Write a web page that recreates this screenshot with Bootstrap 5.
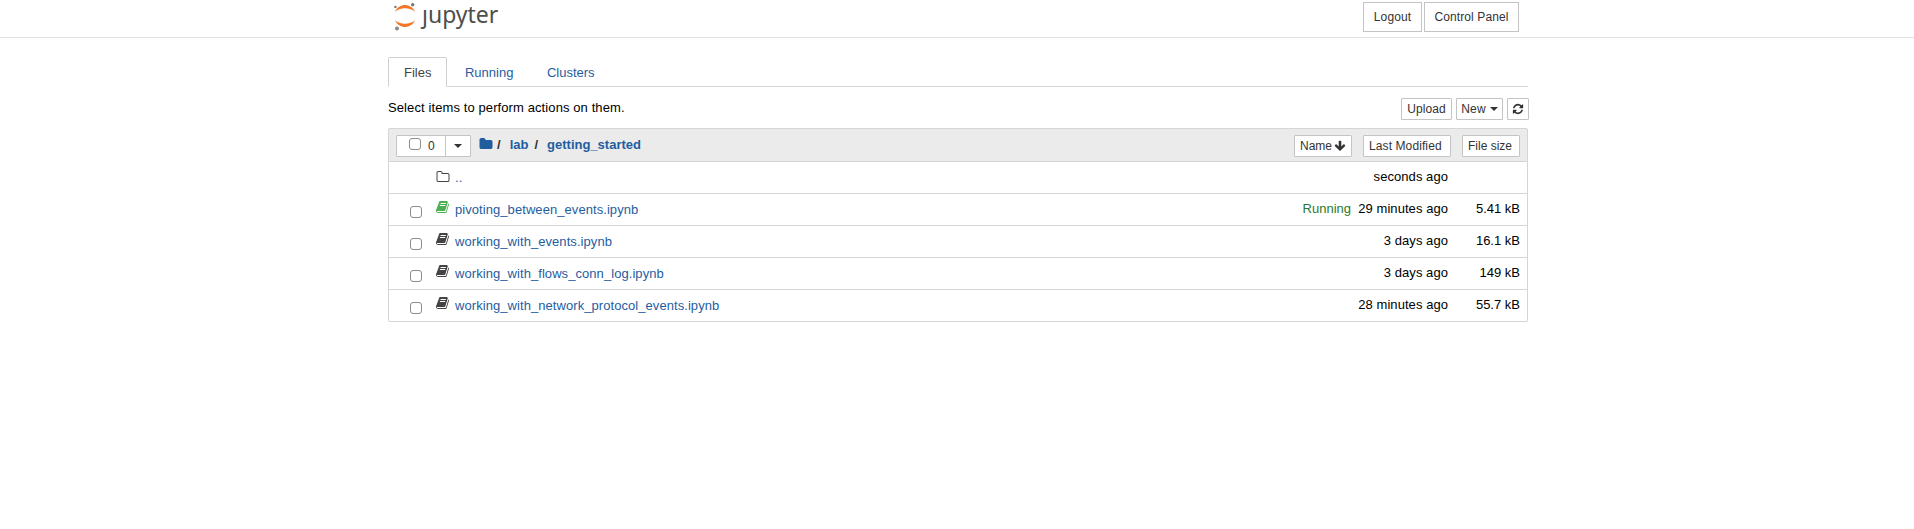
<!DOCTYPE html>
<html lang="en">
<head>
<meta charset="utf-8">
<title>jupyter</title>
<link href="https://cdn.jsdelivr.net/npm/bootstrap@5.3.0/dist/css/bootstrap.min.css" rel="stylesheet">
<style>
body{font-family:"Liberation Sans",Arial,sans-serif;font-size:13px;line-height:20px;color:#000;background:#fff;padding-left:2px}
a{color:#1f5d9f;text-decoration:none}
svg{display:block;fill:currentColor;flex:none}
.page-width{width:1140px}
.site-head{height:38px;border-bottom:1px solid #e2e2e2;margin-left:-2px;padding-left:2px}
.wordmark{font-family:"Noto Sans",sans-serif;font-size:23px;line-height:29px;color:#4e4e4e}
.btn{--bs-btn-font-size:12px;--bs-btn-line-height:18px;--bs-btn-padding-x:5px;--bs-btn-padding-y:1px;--bs-btn-border-radius:1px;--bs-btn-border-color:#c4c4c4;--bs-btn-bg:#fff;--bs-btn-color:#333;height:22px;white-space:nowrap;display:inline-flex;align-items:center}
.site-head .btn{height:30px;--bs-btn-padding-x:0;--bs-btn-border-radius:0;justify-content:center;margin-top:2px;letter-spacing:.1px}
.nav-tabs{--bs-nav-link-padding-x:15px;--bs-nav-link-padding-y:4px;--bs-nav-tabs-border-color:#d5d5d5;--bs-nav-tabs-border-radius:2px;--bs-nav-link-color:#1f5d9f;--bs-nav-tabs-link-active-border-color:#d0d0d0 #d0d0d0 #fff;--bs-nav-tabs-link-active-color:#444;--bs-nav-link-font-size:13px;height:30px;margin-top:19px}
.nav-tabs .nav-link{height:30px;line-height:22px}
.nav-tabs .nav-item{margin-right:1.5px}
.toolbar{height:41px;padding-top:11px;margin-right:-1px}
.toolbar .btn{justify-content:center;--bs-btn-padding-x:0;letter-spacing:.12px}
.hint{letter-spacing:.1px}
.tri{border:4px solid transparent;border-top-color:#333;border-bottom:0}
.files{--bs-list-group-border-color:#d5d5d5;--bs-list-group-border-radius:2px;--bs-list-group-item-padding-x:7px;--bs-list-group-item-padding-y:0;--bs-list-group-color:#000}
.files .list-group-item{height:32px}
.files .list-head{height:34px;background:#ebebeb}
.tick{width:12px;height:12px;border:1px solid #8c8c8c;border-radius:3px;background:#fff;flex:none}
.row-tick{width:12px;margin:4px 14px 0 14px}
.book{color:#444;margin-top:2px}
.file-name{margin:2px 0 0 5px;letter-spacing:.065px}
.when,.bytes,.running{margin-top:1px}
.when{width:97px;letter-spacing:.06px}
.bytes{width:72px}
.running{color:#2b7a2b}
.crumbs{color:#333;font-weight:700}
</style>
</head>
<body>
<header class="site-head">
  <div class="page-width mx-auto d-flex justify-content-between">
    <div class="d-flex ps-1">
      <svg width="25" height="32" viewBox="0 0 25 32" style="margin-left:1px">
        <path fill="#f37726" d="M2 11.700C4 7.200 8 5 12 5s8 2.200 10 6.700C19.500 9.400 16 8.200 12 8.200S4.500 9.400 2 11.700zM2 20.200C4 24.700 8 27 12 27s8-2.300 10-6.800c-2.500 2.300-6 3.500-10 3.500S4.500 22.500 2 20.200z"/>
        <circle cx="2.400" cy="6.900" r="1.200" fill="#777"/><circle cx="19.700" cy="4.700" r="1.700" fill="#777"/><circle cx="4" cy="28.500" r="2" fill="#888"/>
      </svg>
      <div class="wordmark ps-1">ȷupyter</div>
    </div>
    <div class="d-flex">
      <button class="btn" style="width:59px;margin-right:2px">Logout</button>
      <button class="btn" style="width:95px;margin-right:9px">Control Panel</button>
    </div>
  </div>
</header>
<main class="page-width mx-auto">
  <ul class="nav nav-tabs">
    <li class="nav-item"><a class="nav-link active" href="#">Files</a></li>
    <li class="nav-item"><a class="nav-link" href="#">Running</a></li>
    <li class="nav-item"><a class="nav-link" href="#">Clusters</a></li>
  </ul>
  <div class="d-flex toolbar">
    <div class="me-auto hint">Select items to perform actions on them.</div>
    <div class="d-flex gap-1">
      <button class="btn" style="width:51px">Upload</button>
      <button class="btn gap-1" style="width:47px">New <span class="tri"></span></button>
      <button class="btn" style="width:22px"><svg width="12" height="12" viewBox="0 0 1792 1792"><path d="M1639 1056q0 5-1 7-64 268-268 434.500t-478 166.500q-146 0-282.500-55t-243.500-157l-129 129q-19 19-45 19t-45-19-19-45v-448q0-26 19-45t45-19h448q26 0 45 19t19 45-19 45l-137 137q71 66 161 102t187 36q134 0 250-65t186-179q11-17 53-117 8-23 30-23h192q13 0 22.500 9.500t9.500 22.500zm25-800v448q0 26-19 45t-45 19h-448q-26 0-45-19t-19-45 19-45l138-138q-148-137-349-137-134 0-250 65t-186 179q-11 17-53 117-8 23-30 23h-199q-13 0-22.500-9.500t-9.500-22.500v-7q65-268 270-434.500t480-166.500q146 0 284 55.500t245 156.500l130-129q19-19 45-19t45 19 19 45z"/></svg></button>
    </div>
  </div>
  <svg width="0" height="0" class="position-absolute"><defs>
    <symbol id="book" viewBox="0 0 1792 1792"><path transform="translate(-64 0)" d="M1703 478q40 57 18 129l-275 906q-19 64-76.500 107.500t-122.500 43.500h-923q-77 0-148.500-53.500t-99.500-131.500q-24-67-2-127 0-4 3-27t4-37q1-8-3-21.500t-3-19.500q2-11 8-21t16.500-23.500 16.500-23.500q23-38 45-91.500t30-91.500q3-10 .5-30t-.5-28q3-11 17-28t17-23q21-36 42-92t25-90q1-9-2.500-32t.5-28q4-13 22-30.500t22-22.500q19-26 42.500-84.500t27.500-96.500q1-8-3-25.500t-2-26.500q2-8 9-18t18-23 17-21q8-12 16.500-30.500t15-35 16-36 19.500-32 26.500-23.500 36-11.500 47.500 5.500l-1 3q38-9 51-9h761q74 0 114 56t18 130l-274 906q-36 119-71.500 153.500t-128.500 34.500h-869q-27 0-38 15-11 16-1 43 24 70 144 70h923q29 0 56-15.500t35-41.500l300-987q7-22 5-57 38 15 59 43zm-1064 2q-4 13 2 22.500t20 9.500h608q13 0 25.500-9.500t16.500-22.500l21-64q4-13-2-22.500t-20-9.500h-608q-13 0-25.500 9.500t-16.500 22.500zm-83 256q-4 13 2 22.500t20 9.500h608q13 0 25.500-9.500t16.500-22.500l21-64q4-13-2-22.500t-20-9.500h-608q-13 0-25.500 9.500t-16.500 22.500z"/></symbol>
  </defs></svg>
  <div class="list-group files">
    <div class="list-group-item list-head d-flex align-items-start">
      <div class="btn-group" style="margin-top:6px">
        <button class="btn" style="width:50px;padding-left:12px"><span class="tick" style="margin:-4px 7px 0 0"></span>0</button>
        <button class="btn justify-content-center" style="width:26px"><span class="tri"></span></button>
      </div>
      <div class="crumbs d-flex" style="margin:6px 0 0 8px">
        <a href="#"><svg width="14" height="14" viewBox="0 0 1792 1792" style="margin-top:2px"><path d="M1728 608v704q0 92-66 158t-158 66h-1216q-92 0-158-66t-66-158v-960q0-92 66-158t158-66h320q92 0 158 66t66 158v32h672q92 0 158 66t66 158z"/></svg></a>
        <span style="margin:0 9px 0 4px">/</span><a href="#">lab</a><span style="margin:0 9px 0 6px">/</span><a href="#">getting_started</a>
      </div>
      <div class="ms-auto d-flex" style="margin-top:6px">
        <button class="btn" style="width:58px;margin-right:11px">Name<svg width="12" height="12" viewBox="0 0 1792 1792" style="margin-left:2px"><path d="M1675 832q0 53-37 90l-651 652q-39 37-91 37-53 0-90-37l-651-652q-38-36-38-90 0-53 38-91l74-75q39-37 91-37 53 0 90 37l294 294v-704q0-52 38-90t90-38h128q52 0 90 38t38 90v704l294-294q37-37 90-37 52 0 91 37l75 75q37 39 37 91z"/></svg></button>
        <button class="btn" style="width:88px;margin-right:11px;letter-spacing:.1px">Last Modified</button>
        <button class="btn" style="width:58px">File size</button>
      </div>
    </div>
    <div class="list-group-item d-flex pt-1">
      <span class="row-tick"></span>
      <svg width="14" height="14" viewBox="0 0 1792 1792" style="margin-top:4px;color:#444"><path d="M1600 1312v-704q0-40-28-68t-68-28h-704q-40 0-68-28t-28-68v-64q0-40-28-68t-68-28h-320q-40 0-68 28t-28 68v960q0 40 28 68t68 28h1216q40 0 68-28t28-68zm128-704v704q0 92-66 158t-158 66h-1216q-92 0-158-66t-66-158v-960q0-92 66-158t158-66h320q92 0 158 66t66 158v32h672q92 0 158 66t66 158z"/></svg>
      <a class="file-name" href="#">..</a>
      <span class="ms-auto when text-end">seconds ago</span><span class="bytes"></span>
    </div>
    <div class="list-group-item d-flex pt-1">
      <span class="row-tick pt-1"><span class="tick d-block"></span></span>
      <svg class="book" width="14" height="14" style="color:#4caf50"><use href="#book"/></svg>
      <a class="file-name" href="#">pivoting_between_events.ipynb</a>
      <span class="ms-auto running">Running</span><span class="when text-end">29 minutes ago</span><span class="bytes text-end">5.41 kB</span>
    </div>
    <div class="list-group-item d-flex pt-1">
      <span class="row-tick pt-1"><span class="tick d-block"></span></span>
      <svg class="book" width="14" height="14"><use href="#book"/></svg>
      <a class="file-name" href="#">working_with_events.ipynb</a>
      <span class="ms-auto when text-end">3 days ago</span><span class="bytes text-end">16.1 kB</span>
    </div>
    <div class="list-group-item d-flex pt-1">
      <span class="row-tick pt-1"><span class="tick d-block"></span></span>
      <svg class="book" width="14" height="14"><use href="#book"/></svg>
      <a class="file-name" href="#">working_with_flows_conn_log.ipynb</a>
      <span class="ms-auto when text-end">3 days ago</span><span class="bytes text-end">149 kB</span>
    </div>
    <div class="list-group-item d-flex pt-1">
      <span class="row-tick pt-1"><span class="tick d-block"></span></span>
      <svg class="book" width="14" height="14"><use href="#book"/></svg>
      <a class="file-name" href="#">working_with_network_protocol_events.ipynb</a>
      <span class="ms-auto when text-end">28 minutes ago</span><span class="bytes text-end">55.7 kB</span>
    </div>
  </div>
</main>
<script src="https://cdn.jsdelivr.net/npm/bootstrap@5.3.0/dist/js/bootstrap.bundle.min.js"></script>
</body>
</html>
